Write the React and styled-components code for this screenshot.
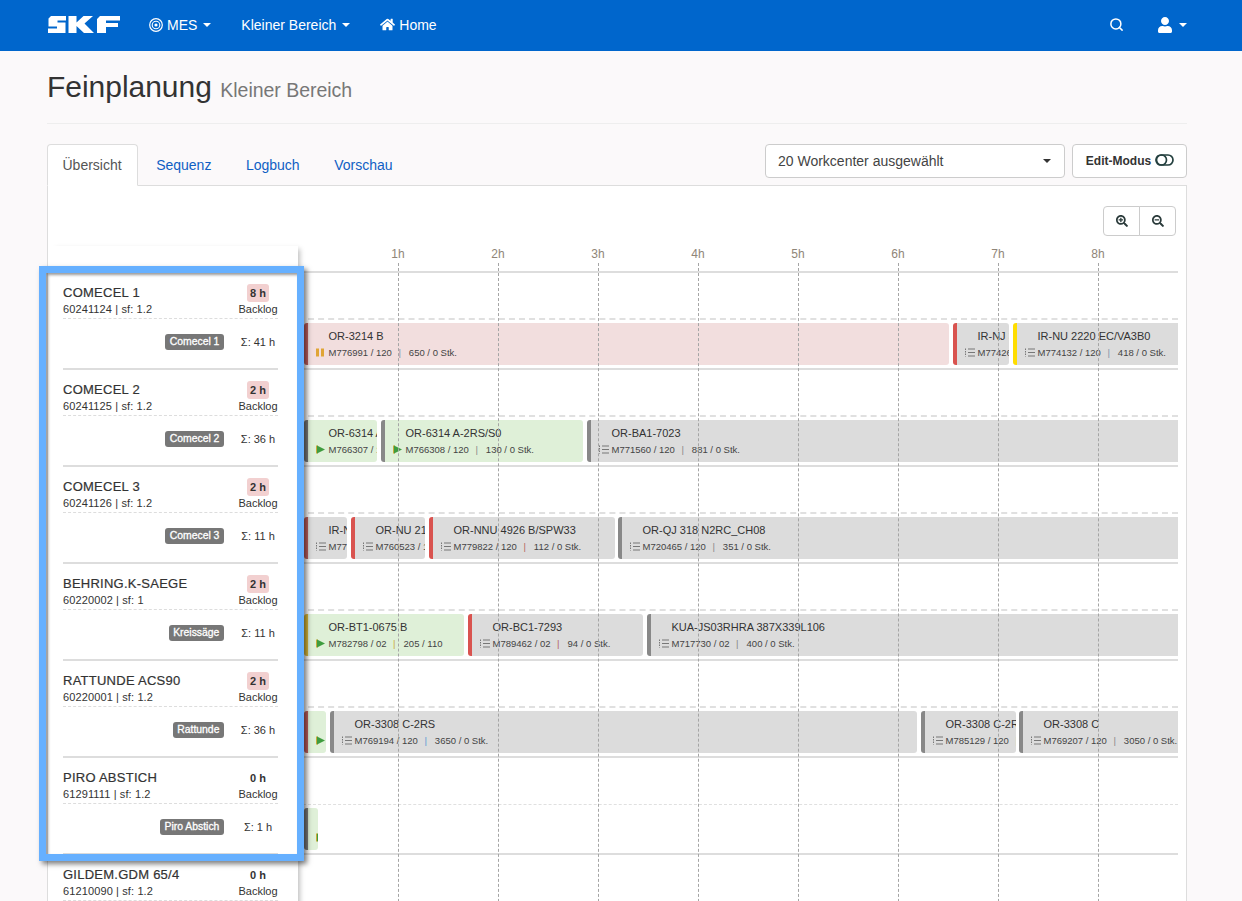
import React from "react";
import styled, { createGlobalStyle } from "styled-components";
import { FaHome, FaSearchMinus, FaSearchPlus, FaUser } from "react-icons/fa";
import { FiSearch } from "react-icons/fi";

const GlobalStyle = createGlobalStyle`
  html, body {
    margin: 0;
    padding: 0;
    height: 100%;
    overflow: hidden;
    background: #fbf9fa;
    font-family: "Liberation Sans", Arial, sans-serif;
    color: #333;
  }
  * { box-sizing: border-box; }
`;

const workcenters = [
  { name: "COMECEL 1", meta: "60241124 | sf: 1.2", backlog: "8 h", late: true, tag: "Comecel 1", sum: "41 h" },
  { name: "COMECEL 2", meta: "60241125 | sf: 1.2", backlog: "2 h", late: true, tag: "Comecel 2", sum: "36 h" },
  { name: "COMECEL 3", meta: "60241126 | sf: 1.2", backlog: "2 h", late: true, tag: "Comecel 3", sum: "11 h" },
  { name: "BEHRING.K-SAEGE", meta: "60220002 | sf: 1", backlog: "2 h", late: true, tag: "Kreissäge", sum: "11 h" },
  { name: "RATTUNDE ACS90", meta: "60220001 | sf: 1.2", backlog: "2 h", late: true, tag: "Rattunde", sum: "36 h" },
  { name: "PIRO ABSTICH", meta: "61291111 | sf: 1.2", backlog: "0 h", tag: "Piro Abstich", sum: "1 h" },
  { name: "GILDEM.GDM 65/4", meta: "61210090 | sf: 1.2", backlog: "0 h", tag: "Gildemeister", sum: "2 h" },
];

const tracks = [
  [
    { from: 304, to: 949, tone: "late", accent: "#c05f5f", icon: "pause", title: "OR-3214 B", order: "M776991 / 120", qty: "650 / 0 Stk.", sep: "#7f93a8" },
    { from: 953, to: 1009, tone: "idle", accent: "#d9534f", icon: "list", title: "IR-NJ 322", order: "M774268 / 120", qty: "90 / 0 Stk.", sep: "#7f93a8" },
    { from: 1013, to: 1190, tone: "idle", accent: "#ffdd00", icon: "list", title: "IR-NU 2220 EC/VA3B0", order: "M774132 / 120", qty: "418 / 0 Stk.", sep: "#7f93a8" },
  ],
  [
    { from: 304, to: 377, tone: "run", accent: "#7c7c7c", icon: "play", title: "OR-6314 A-2RS", order: "M766307 / 120", qty: "120 / 0 Stk.", sep: "#888" },
    { from: 381, to: 583, tone: "run", accent: "#888", icon: "play", title: "OR-6314 A-2RS/S0", order: "M766308 / 120", qty: "130 / 0 Stk.", sep: "#888" },
    { from: 587, to: 1190, tone: "idle", accent: "#888", icon: "list", title: "OR-BA1-7023", order: "M771560 / 120", qty: "881 / 0 Stk.", sep: "#888" },
  ],
  [
    { from: 304, to: 347, tone: "idle", accent: "#c05f5f", icon: "list", title: "IR-NU 2212", order: "M776120 / 120", qty: "80 / 0 Stk.", sep: "#b5655f" },
    { from: 351, to: 425, tone: "idle", accent: "#d9534f", icon: "list", title: "OR-NU 2136", order: "M760523 / 120", qty: "64 / 0 Stk.", sep: "#b5655f" },
    { from: 429, to: 615, tone: "idle", accent: "#d9534f", icon: "list", title: "OR-NNU 4926 B/SPW33", order: "M779822 / 120", qty: "112 / 0 Stk.", sep: "#b5655f" },
    { from: 618, to: 1190, tone: "idle", accent: "#888", icon: "list", title: "OR-QJ 318 N2RC_CH08", order: "M720465 / 120", qty: "351 / 0 Stk.", sep: "#888" },
  ],
  [
    { from: 304, to: 464, tone: "run", accent: "#dcbc3c", icon: "play", title: "OR-BT1-0675 B", order: "M782798 / 02", qty: "205 / 110", sep: "#c9a93a" },
    { from: 468, to: 643, tone: "idle", accent: "#d9534f", icon: "list", title: "OR-BC1-7293", order: "M789462 / 02", qty: "94 / 0 Stk.", sep: "#b5655f" },
    { from: 647, to: 1190, tone: "idle", accent: "#888", icon: "list", title: "KUA-JS03RHRA 387X339L106", order: "M717730 / 02", qty: "400 / 0 Stk.", sep: "#888" },
  ],
  [
    { from: 304, to: 326, tone: "run", accent: "#c05f5f", icon: "play", title: "OR-3308", order: "M769190", qty: "", sep: "#888" },
    { from: 330, to: 917, tone: "idle", accent: "#888", icon: "list", title: "OR-3308 C-2RS", order: "M769194 / 120", qty: "3650 / 0 Stk.", sep: "#5b9bd5" },
    { from: 921, to: 1016, tone: "idle", accent: "#888", icon: "list", title: "OR-3308 C-2RS", order: "M785129 / 120", qty: "900 / 0 Stk.", sep: "#888" },
    { from: 1019, to: 1190, tone: "idle", accent: "#888", icon: "list", title: "OR-3308 C", order: "M769207 / 120", qty: "3050 / 0 Stk.", sep: "#888" },
  ],
  [
    { from: 304, to: 318, tone: "run", accent: "#7c7c7c", icon: "play", title: "", order: "", qty: "", sep: "#888" },
  ],
  [],
];

const hours = [1, 2, 3, 4, 5, 6, 7, 8];
const CHART_ORIGIN = 298;

const barFill = { late: "#f2dede", run: "#dff0d8", idle: "#dcdcdc" };

const Page = styled.div`
  height: 100vh;
  overflow: hidden;
`;

const NavBar = styled.nav`
  height: 51px;
  padding: 0 55px 2px 48px;
  background: #0066cc;
  display: flex;
  align-items: center;
  gap: 30px;
  color: #fff;
  font-size: 14px;
`;

const Logo = styled.svg`
  width: 72px;
  height: 17px;
  margin-right: -1px;
  fill: #fff;
`;

const NavItem = styled.span`
  display: flex;
  align-items: center;
  gap: 4px;
`;

const Caret = styled.i`
  width: 0;
  height: 0;
  margin-left: 2px;
  border-top: 4px solid ${(p) => p.$color || "currentColor"};
  border-left: 4px solid transparent;
  border-right: 4px solid transparent;
`;

const NavRight = styled.div`
  margin-left: auto;
  display: flex;
  align-items: center;
  gap: 33px;
`;

const Main = styled.main`
  padding: 0 55px 0 47px;
`;

const PageHeader = styled.header`
  height: 73px;
  padding-top: 18px;
  border-bottom: 1px solid #eeeeee;
`;

const Title = styled.h1`
  margin: 0;
  font-size: 30px;
  line-height: 36px;
  font-weight: 400;
  letter-spacing: -0.03px;
  color: #333;
`;

const TitleSmall = styled.small`
  margin-left: 8.5px;
  font-size: 19.5px;
  color: #777;
`;

const TabBar = styled.div`
  position: relative;
  z-index: 1;
  margin-top: 20px;
  margin-bottom: -1px;
  height: 42px;
  display: flex;
  align-items: flex-start;
`;

const Tab = styled.a`
  height: 42px;
  margin-right: 3px;
  padding: 0 15px 0 14.5px;
  display: flex;
  align-items: center;
  font-size: 14px;
  color: ${(p) => (p.$active ? "#555" : "#0f5fc4")};
  background: ${(p) => (p.$active ? "#fff" : "transparent")};
  border: 1px solid ${(p) => (p.$active ? "#ddd" : "transparent")};
  border-bottom-color: ${(p) => (p.$active ? "#fff" : "transparent")};
  border-radius: 4px 4px 0 0;
`;

const SelectBox = styled.div`
  margin-left: auto;
  width: 300px;
  height: 34px;
  padding: 0 13px 0 12px;
  display: flex;
  align-items: center;
  justify-content: space-between;
  font-size: 14px;
  color: #444;
  background: #fff;
  border: 1px solid #ccc;
  border-radius: 4px;
`;

const EditButton = styled.button`
  margin-left: 7px;
  width: 115px;
  height: 34px;
  padding: 0 0 0 1px;
  display: flex;
  align-items: center;
  justify-content: center;
  gap: 4px;
  font-family: inherit;
  font-size: 12px;
  font-weight: 700;
  color: #333;
  background: #fff;
  border: 1px solid #ccc;
  border-radius: 4px;
`;

const ToggleIcon = styled.svg`
  width: 19px;
  height: 12px;
  margin-top: -2px;
  fill: none;
  stroke: #24403f;
  stroke-width: 1.7;
`;

const Panel = styled.section`
  background: #fff;
  border: 1px solid #ddd;
  padding-right: 8px;
`;

const Toolbar = styled.div`
  height: 60px;
  padding: 20px 2px 0 0;
  display: flex;
  justify-content: flex-end;
`;

const ZoomButton = styled.button`
  width: 37px;
  height: 30px;
  padding: 0;
  display: flex;
  align-items: center;
  justify-content: center;
  color: #2a3a3a;
  font-size: 12px;
  background: #fff;
  border: 1px solid #ccc;
  border-radius: ${(p) => (p.$first ? "4px 0 0 4px" : "0 4px 4px 0")};
  margin-left: ${(p) => (p.$first ? "0" : "-1px")};
`;

const Gantt = styled.div`
  display: flex;
  align-items: flex-start;
`;

const Sidebar = styled.aside`
  position: relative;
  z-index: 2;
  flex: 0 0 250px;
  padding-top: 27px;
  background: #fff;
  box-shadow: 5px 0 5px -3px rgba(0, 0, 0, 0.25);
`;

const Highlight = styled.div`
  position: absolute;
  left: -9px;
  top: 20px;
  width: 265px;
  height: 595px;
  border: 7px solid #66b0ff;
  box-shadow: 3px 3px 5px rgba(0, 0, 0, 0.5), inset 2px 2px 3px rgba(0, 0, 0, 0.4);
  pointer-events: none;
`;

const Card = styled.div`
  height: 97px;
  margin: 0 20px 0 15px;
  border-bottom: 2px solid #ddd;
`;

const CardTop = styled.div`
  height: 46px;
  padding-top: 11px;
  display: flex;
  justify-content: space-between;
  border-bottom: 1px dashed #ddd;
`;

const Name = styled.div`
  margin-top: 1px;
  font-size: 13px;
  line-height: 16px;
  letter-spacing: 0.25px;
  color: #333;
  -webkit-text-stroke: 0.2px #333;
`;

const Meta = styled.div`
  margin-top: 1px;
  font-size: 11px;
  line-height: 15px;
  letter-spacing: 0.12px;
  color: #333;
`;

const BacklogCol = styled.div`
  width: 40px;
  display: flex;
  flex-direction: column;
  align-items: center;
  font-size: 11px;
  line-height: 15px;
`;

const BacklogHours = styled.span`
  width: 22px;
  height: 18px;
  display: flex;
  align-items: center;
  justify-content: center;
  font-weight: 700;
  white-space: nowrap;
  border-radius: 3px;
  background: ${(p) => (p.$late ? "#f2d0d0" : "transparent")};
`;

const CardBottom = styled.div`
  height: 49px;
  padding-bottom: 4px;
  display: flex;
  align-items: center;
  justify-content: flex-end;
  gap: 14px;
  font-size: 11px;
`;

const Tag = styled.span`
  height: 16px;
  padding: 0 4.6px;
  display: flex;
  align-items: center;
  font-size: 10.4px;
  color: #fff;
  -webkit-text-stroke: 0.3px #fff;
  background: #777;
  border-radius: 3px;
`;

const SumCol = styled.span`
  width: 40px;
  text-align: center;
  white-space: nowrap;
`;

const Chart = styled.div`
  position: relative;
  flex: 1;
  min-width: 0;
`;

const TickRow = styled.div`
  position: relative;
  height: 27px;
  font-size: 12px;
  color: #8f8578;
  border-bottom: 2px solid #ddd;
`;

const Tick = styled.span`
  position: absolute;
  top: 1px;
  left: ${(p) => p.$hour * 100 - 10}px;
  width: 20px;
  text-align: center;
  line-height: 14px;
`;

const GridLine = styled.div`
  position: absolute;
  z-index: 1;
  top: 17px;
  bottom: 0;
  left: ${(p) => p.$hour * 100}px;
  border-left: 1px dashed #a5a5a5;
`;

const Track = styled.div`
  position: relative;
  height: 97px;
  overflow: hidden;
  border-bottom: 2px solid #ddd;
`;

const TrackSplit = styled.div`
  height: 47px;
  border-bottom: ${(p) => (p.$thin ? "1px" : "2px")} dashed #e0e0e0;
`;

const Bar = styled.div`
  position: absolute;
  top: 50px;
  left: ${(p) => p.$left}px;
  width: ${(p) => p.$width}px;
  height: 42px;
  padding-top: 6px;
  overflow: hidden;
  white-space: nowrap;
  background: ${(p) => barFill[p.$tone]};
  border-left: 4px solid ${(p) => p.$accent};
  border-radius: 3px;
`;

const BarTitle = styled.div`
  height: 14px;
  padding-left: 20.5px;
  font-size: 11px;
  line-height: 14px;
  color: #333;
`;

const BarInfo = styled.div`
  margin-top: 2px;
  padding-left: 8px;
  display: flex;
  align-items: center;
  height: 14px;
  font-size: 9.5px;
  color: #444;
`;

const IconSlot = styled.span`
  flex: 0 0 12.5px;
  display: flex;
  align-items: center;
`;

const Sep = styled.span`
  margin: 0 8px 0 6.5px;
  color: ${(p) => p.$color};
`;

const StatusIcon = ({ kind }) => {
  if (kind === "pause") {
    return (
      <svg width="9" height="9" viewBox="0 0 9 9" fill="#e0a535">
        <rect x="0" y="0.5" width="3" height="8" />
        <rect x="5" y="0.5" width="3" height="8" />
      </svg>
    );
  }
  if (kind === "play") {
    return (
      <svg width="10" height="9" viewBox="0 0 10 9">
        <rect x="0" y="0.5" width="2" height="8" fill="#c9a93a" />
        <polygon points="1,0.5 9,4.5 1,8.5" fill="#3f9c3f" />
      </svg>
    );
  }
  return (
    <svg width="10" height="9" viewBox="0 0 10 9" fill="none" stroke="#777" strokeWidth="1">
      <path d="M0.5 0.5V8.5" strokeDasharray="1.5 1" />
      <path d="M3 1H10M3 4.5H10M3 8H10" />
    </svg>
  );
};

const GanttBar = ({ bar }) => (
  <Bar $left={bar.from - CHART_ORIGIN} $width={bar.to - bar.from} $tone={bar.tone} $accent={bar.accent}>
    <BarTitle>{bar.title}</BarTitle>
    <BarInfo>
      <IconSlot>
        <StatusIcon kind={bar.icon} />
      </IconSlot>
      {bar.order}
      {bar.qty && <Sep $color={bar.sep}>|</Sep>}
      {bar.qty}
    </BarInfo>
  </Bar>
);

const App = () => {
  return (
    <Page>
      <GlobalStyle />
      <NavBar>
        <Logo viewBox="0 0 72 17">
          <path d="M3 0H18V4.5H9.5V6.5H17.5V17H0V12.5H9V10.5H0.5V2.5Z" />
          <path d="M20.5 0H28.5V6.5L35.5 0H45L36.5 7.5L46 17H36L28.5 10V17H20.5Z" />
          <path d="M52 0H72V4.5H58V7H70V11H58V17H49V3Z" />
        </Logo>
        <NavItem>
          <svg width="14" height="14" viewBox="0 0 14 14" fill="none" stroke="#fff">
            <circle cx="7" cy="7" r="6.3" strokeWidth="1.2" />
            <circle cx="7" cy="7" r="3.8" strokeWidth="1.1" />
            <circle cx="7" cy="7" r="1.6" fill="#fff" strokeWidth="0" />
          </svg>
          MES <Caret />
        </NavItem>
        <NavItem>
          Kleiner Bereich <Caret />
        </NavItem>
        <NavItem>
          <FaHome size={15} /> Home
        </NavItem>
        <NavRight>
          <FiSearch size={15} strokeWidth={2.4} />
          <NavItem>
            <FaUser size={16} />
            <Caret />
          </NavItem>
        </NavRight>
      </NavBar>

      <Main>
        <PageHeader>
          <Title>
            Feinplanung<TitleSmall>Kleiner Bereich</TitleSmall>
          </Title>
        </PageHeader>

        <TabBar>
          <Tab $active>Übersicht</Tab>
          <Tab>Sequenz</Tab>
          <Tab>Logbuch</Tab>
          <Tab>Vorschau</Tab>
          <SelectBox>
            20 Workcenter ausgewählt
            <Caret $color="#333" />
          </SelectBox>
          <EditButton>
            Edit-Modus
            <ToggleIcon viewBox="0 0 19 12">
              <rect x="1" y="1" width="17" height="10" rx="5" />
              <circle cx="6.5" cy="6" r="5" />
            </ToggleIcon>
          </EditButton>
        </TabBar>

        <Panel>
          <Toolbar>
            <ZoomButton $first>
              <FaSearchPlus />
            </ZoomButton>
            <ZoomButton>
              <FaSearchMinus />
            </ZoomButton>
          </Toolbar>

          <Gantt>
            <Sidebar>
              {workcenters.map((wc) => (
                <Card key={wc.name}>
                  <CardTop>
                    <div>
                      <Name>{wc.name}</Name>
                      <Meta>{wc.meta}</Meta>
                    </div>
                    <BacklogCol>
                      <BacklogHours $late={wc.late}>{wc.backlog}</BacklogHours>
                      Backlog
                    </BacklogCol>
                  </CardTop>
                  <CardBottom>
                    <Tag>{wc.tag}</Tag>
                    <SumCol>Σ: {wc.sum}</SumCol>
                  </CardBottom>
                </Card>
              ))}
              <Highlight />
            </Sidebar>

            <Chart>
              <TickRow>
                {hours.map((h) => (
                  <Tick key={h} $hour={h}>
                    {h}h
                  </Tick>
                ))}
              </TickRow>
              {tracks.map((bars, i) => (
                <Track key={i}>
                  <TrackSplit $thin={i > 4} />
                  {bars.map((bar) => (
                    <GanttBar key={bar.from} bar={bar} />
                  ))}
                </Track>
              ))}
              {hours.map((h) => (
                <GridLine key={h} $hour={h} />
              ))}
            </Chart>
          </Gantt>
        </Panel>
      </Main>
    </Page>
  );
};

export default App;
